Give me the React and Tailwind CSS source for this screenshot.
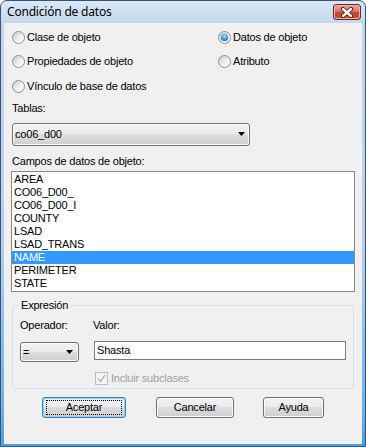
import React from "react";

const font = { fontFamily: '"Liberation Sans", Arial, sans-serif' };

function Radio({ checked, label }) {
  return (
    <div className="flex items-center h-[13px] gap-[2px]">
      <span className="w-[13px] h-[13px] rounded-full border border-[#8e8f8f] bg-[linear-gradient(135deg,#c9c9c9,#f4f4f4_60%,#ffffff)] flex items-center justify-center shrink-0">
        {checked && (
          <span className="w-[7px] h-[7px] rounded-full bg-[radial-gradient(circle_at_50%_35%,#a6e6ff,#3b8fd6_55%,#0f4a85)] shadow-[0_0_1px_#2d6fb0]" />
        )}
      </span>
      <span className="text-[11px] leading-[13px] tracking-[-0.2px] text-black whitespace-nowrap">{label}</span>
    </div>
  );
}

function Arrow() {
  return (
    <svg width="8" height="5" viewBox="0 0 8 5">
      <path d="M0 0 H7 L3.5 4 Z" fill="#000" />
    </svg>
  );
}

function Button({ children, width, def }) {
  return (
    <div
      className={
        "h-[21px] rounded-[3px] border flex items-center justify-center text-[11px] tracking-[-0.2px] text-black bg-[linear-gradient(to_bottom,#f2f2f2,#ebebeb_49%,#dddddd_50%,#cfcfcf)] " +
        (def ? "border-[#3c7fb1] shadow-[inset_0_0_0_1px_#8ed7f7]" : "border-[#707070] shadow-[inset_0_0_0_1px_#fcfcfc]")
      }
      style={{ width }}
    >
      {def ? (
        <span className="border border-dotted border-black w-[calc(100%-6px)] h-[15px] flex items-center justify-center leading-[13px]">
          {children}
        </span>
      ) : (
        <span className="leading-[13px]">{children}</span>
      )}
    </div>
  );
}

const fields = ["AREA", "CO06_D00_", "CO06_D00_I", "COUNTY", "LSAD", "LSAD_TRANS", "NAME", "PERIMETER", "STATE"];

export default function App() {
  return (
    <div
      className="w-[366px] h-[447px] flex flex-col rounded-t-[7px] border border-[#34557c] bg-[linear-gradient(to_bottom,#dce8f5,#c3d7ed_5%,#b4cfec_55%,#6fb0e4_92%,#4a9ddc)] overflow-hidden"
      style={font}
    >
      {/* Title bar */}
      <div className="h-[22px] flex items-start justify-between pl-[6px] pr-[4px] shrink-0">
        <span
          className="text-[12px] leading-[22px] tracking-[-0.2px] text-black"
          style={{ fontFamily: '"Noto Sans", "Open Sans", sans-serif' }}
        >
          Condición de datos
        </span>
        <div className="mt-[3px] w-[28px] h-[16px] rounded-[3px] border border-[#6b2a1c] bg-[linear-gradient(to_bottom,#e9a99a,#d77a62_45%,#c5442a_55%,#c9583b)] shadow-[inset_0_0_0_1px_#eab5a8] flex items-center justify-center">
          <svg width="14" height="11" viewBox="0 0 14 11">
            <path d="M3 2 L11 9 M11 2 L3 9" stroke="#4a1a12" strokeWidth="4.2" strokeLinecap="round" />
            <path d="M3 2 L11 9 M11 2 L3 9" stroke="#ffffff" strokeWidth="2.4" strokeLinecap="round" />
          </svg>
        </div>
      </div>

      {/* Client */}
      <div className="mx-[3px] mb-[2px] flex-1 bg-[#f0f0f0] flex flex-col pl-[8px]">
        {/* Radios */}
        <div className="grid grid-cols-[206px_1fr] pt-[8px]">
          <div className="flex flex-col">
            <div className="h-[24px]"><Radio label="Clase de objeto" /></div>
            <div className="h-[25px]"><Radio label="Propiedades de objeto" /></div>
            <div className="h-[13px]"><Radio label="Vínculo de base de datos" /></div>
          </div>
          <div className="flex flex-col">
            <div className="h-[24px]"><Radio checked label="Datos de objeto" /></div>
            <div className="h-[25px]"><Radio label="Atributo" /></div>
          </div>
        </div>

        <div className="mt-[9px] text-[11px] leading-[13px] tracking-[-0.2px]">Tablas:</div>
        <div className="mt-[8px] w-[238px] h-[23px] rounded-[3px] border border-[#707070] bg-[linear-gradient(to_bottom,#f2f2f2,#ebebeb_49%,#dddddd_50%,#cfcfcf)] shadow-[inset_0_0_0_1px_#fbfbfb] flex items-center justify-between pl-[2px] pr-[3px]">
          <span className="text-[11px] leading-[13px] tracking-[-0.2px]">co06_d00</span>
          <Arrow />
        </div>

        <div className="mt-[9px] text-[11px] leading-[13px] tracking-[-0.2px]">Campos de datos de objeto:</div>
        <div className="mt-[3px] -ml-[1px] w-[344px] h-[121px] border border-[#828790] bg-white pt-[1px] flex flex-col">
          {fields.map((f) => (
            <div
              key={f}
              className={
                "h-[13px] leading-[13px] text-[11px] tracking-[-0.2px] pl-[2px] " +
                (f === "NAME" ? "bg-[#3399ff] text-white" : "text-black")
              }
            >
              {f}
            </div>
          ))}
        </div>

        {/* Group box */}
        <div className="relative mt-[13px] w-[342px] h-[84px] rounded-[3px] border border-[#d5dfe5] pl-[7px] pt-[13px]">
          <span className="absolute left-[6px] top-[-7px] px-[2px] bg-[#f0f0f0] text-[11px] leading-[13px] tracking-[-0.2px]">
            Expresión
          </span>
          <div className="flex">
            <div className="w-[73px] flex flex-col">
              <div className="text-[11px] leading-[13px] tracking-[-0.2px]">Operador:</div>
              <div className="mt-[10px] w-[59px] h-[20px] rounded-[3px] border border-[#707070] bg-[linear-gradient(to_bottom,#f2f2f2,#ebebeb_49%,#dddddd_50%,#cfcfcf)] shadow-[inset_0_0_0_1px_#fbfbfb] flex items-center justify-between pl-[2px] pr-[4px]">
                <span className="text-[11px] leading-[13px]">=</span>
                <Arrow />
              </div>
            </div>
            <div className="flex flex-col">
              <div className="text-[11px] leading-[13px] tracking-[-0.2px]">Valor:</div>
              <div className="mt-[9px] ml-[1px] w-[252px] h-[19px] border border-[#7a7a7a] bg-white flex items-center pl-[2px]">
                <span className="text-[11px] leading-[13px] tracking-[-0.2px]">Shasta</span>
              </div>
              <div className="mt-[12px] ml-[2px] flex items-center gap-[3px] h-[13px]">
                <span className="w-[13px] h-[13px] border border-[#bcbcbc] bg-[#f4f4f4] flex items-center justify-center">
                  <svg width="9" height="9" viewBox="0 0 9 9">
                    <path d="M1 4.5 L3.5 7.5 L8 1" stroke="#b8b8b8" strokeWidth="1.6" fill="none" />
                  </svg>
                </span>
                <span className="text-[11px] leading-[13px] tracking-[-0.2px] text-[#a0a0a0]">Incluir subclases</span>
              </div>
            </div>
          </div>
        </div>

        {/* Buttons */}
        <div className="mt-[8px] flex pl-[30px]">
          <Button width={84} def>Aceptar</Button>
          <div className="w-[30px]" />
          <Button width={78}>Cancelar</Button>
          <div className="w-[29px]" />
          <Button width={61}>Ayuda</Button>
        </div>
      </div>
    </div>
  );
}
